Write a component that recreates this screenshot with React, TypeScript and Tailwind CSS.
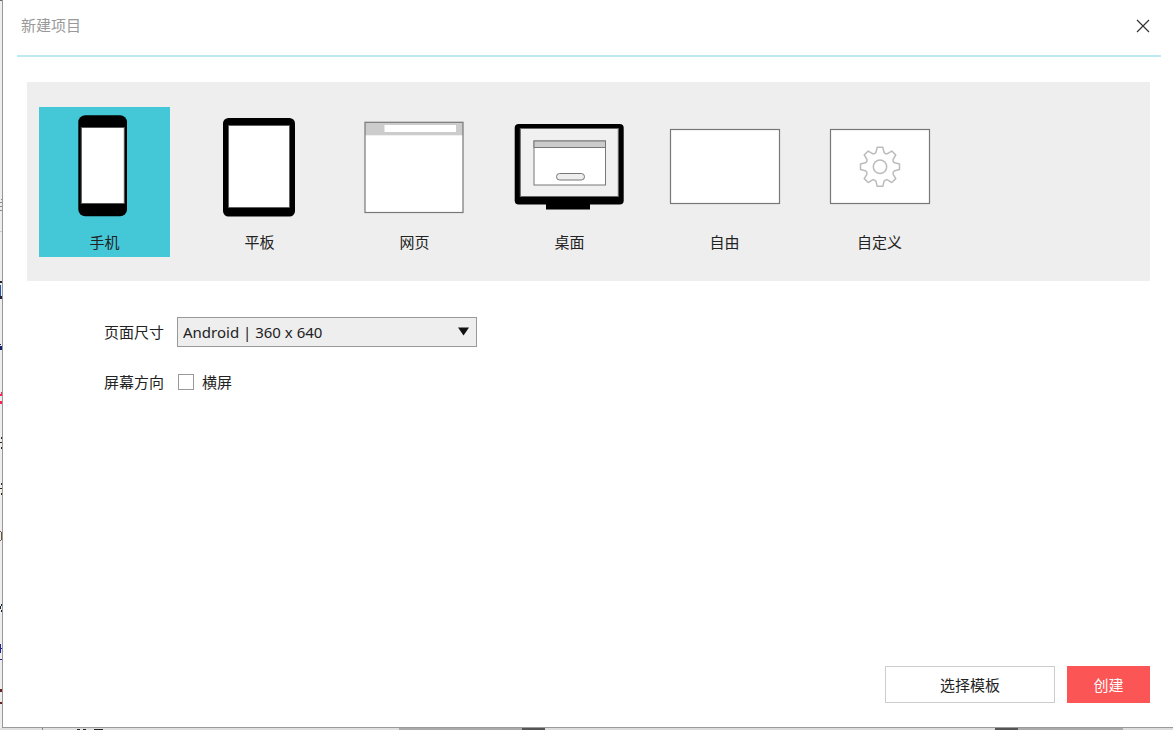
import React, { useState } from "react";
import type { ReactNode } from "react";

const gearPath = (() => {
  const turn = (x: number, y: number, step: number) => {
    const a = (step * Math.PI) / 4;
    const rx = x * Math.cos(a) - y * Math.sin(a);
    const ry = x * Math.sin(a) + y * Math.cos(a);
    return `${rx.toFixed(2)} ${ry.toFixed(2)}`;
  };
  let d = "";
  for (let i = 0; i < 8; i++) {
    d += `${i === 0 ? "M" : "L"}${turn(-2.8, -19.5, i)}L${turn(2.8, -19.5, i)}L${turn(4, -14.6, i)}`;
    d += `C${turn(5.4, -12.6, i)} ${turn(-5.4, -12.6, i + 1)} ${turn(-4, -14.6, i + 1)}`;
  }
  return d + "Z";
})();

type Device = { id: string; label: string; art: ReactNode };

const devices: Device[] = [
  {
    id: "phone",
    label: "手机",
    art: (
      <>
        <rect x="39.3" y="8.3" width="48.7" height="101" rx="7" />
        <rect x="42.3" y="20.5" width="43" height="76" fill="#fff" stroke="#555" />
      </>
    ),
  },
  {
    id: "tablet",
    label: "平板",
    art: (
      <>
        <rect x="29" y="11" width="72" height="98.5" rx="5.5" />
        <rect x="34.5" y="18.5" width="61" height="82" fill="#fff" stroke="#555" strokeWidth=".7" />
      </>
    ),
  },
  {
    id: "web",
    label: "网页",
    art: (
      <>
        <rect x="16" y="15.3" width="98" height="90.2" fill="#fff" />
        <rect x="16" y="15.3" width="98" height="13" fill="#ccc" />
        <rect x="35.5" y="18" width="71.5" height="7" fill="#fff" />
        <rect x="16" y="15.3" width="98" height="90.2" fill="none" stroke="#777" strokeWidth="1.2" />
      </>
    ),
  },
  {
    id: "desktop",
    label: "桌面",
    art: (
      <>
        <rect x="10.7" y="17" width="109" height="80.5" rx="4" />
        <rect x="42" y="96" width="44" height="6.5" />
        <rect x="16.3" y="21.5" width="98" height="68" fill="#f1f0f0" stroke="#666" />
        <rect x="30" y="34" width="71.5" height="44" fill="#fff" stroke="#777" />
        <rect x="30" y="34" width="71.5" height="6.5" fill="#ccc" stroke="#777" />
        <rect x="52.5" y="66.5" width="28" height="6.5" rx="3.2" fill="#eee" stroke="#777" />
      </>
    ),
  },
  {
    id: "free",
    label: "自由",
    art: <rect x="11.5" y="22.5" width="109" height="74" fill="#fff" stroke="#777" strokeWidth="1.2" />,
  },
  {
    id: "custom",
    label: "自定义",
    art: (
      <>
        <rect x="16.5" y="22.5" width="99" height="74" fill="#fff" stroke="#777" strokeWidth="1.2" />
        <g transform="translate(66 59.8)" fill="none" stroke="#bbb" strokeWidth="1.5" strokeLinejoin="round">
          <path d={gearPath} />
          <circle r="6.7" />
        </g>
      </>
    ),
  },
];

/* Slices of the window behind the dialog */
function BackdropLeft() {
  return (
    <div className="w-0.5 shrink-0 bg-[#eee]" aria-hidden="true">
      <svg width="2" height="728" viewBox="0 0 2 728" className="block">
        <path d="M0 0h2v1H0z" fill="#765" />
        <path d="M1 199h1v1H1zM0 202h2v1H0zM0 206h2v1H0zM0 210h2v1H0z" fill="#888" />
        <path d="M0 231h2v1H0z" fill="#ccc" />
        <path d="M0 281h2v2H0zM0 296h2v3H0z" fill="#223" />
        <path d="M0 285h1v11H0z" fill="#2456b0" />
        <path d="M0 344h1v1H0zM0 346h2v4H0z" fill="#126" />
        <path d="M1 392h1v2H1zM0 394h2v2H0zM0 401h2v3H0z" fill="#f25" />
        <path d="M1 437h1v2H1zM0 442h2v1H0zM1 447h1v2H1zM1 483h1v2H1zM0 488h2v1H0zM1 493h1v2H1z" fill="#321" />
        <path d="M0 531h1v1H0zM1 532h1v8H1zM0 540h1v1H0z" fill="#654" />
        <path d="M1 604h1v2H1zM0 606h1v3H0zM1 610h1v2H1z" fill="#123" />
        <path d="M0 644h1v9H0zM0 648h2v1H0zM0 659h2v1H0z" fill="#229" />
        <path d="M0 689h2v3H0zM0 702h2v2H0z" fill="#622" />
      </svg>
    </div>
  );
}

function BackdropBottom() {
  return (
    <div className="h-0.5 shrink-0 overflow-hidden bg-[#ddd]" aria-hidden="true">
      <svg width="1173" height="2" viewBox="0 0 1173 2" className="block">
        <path d="M0 0h400v2H0z" fill="#e0e0e0" />
        <path d="M42 0h1v2h-1z" fill="#888" />
        <path d="M77 1h3v1h-3zM83 1h3v1h-3zM94 1h9v1h-9z" fill="#222" />
        <path d="M399 0h123v2H399zM1018 0h105v2h-105z" fill="#aaa" />
        <path d="M522 0h23v2h-23zM995 0h23v2h-23z" fill="#555" />
      </svg>
    </div>
  );
}

export default function App() {
  const [device, setDevice] = useState("phone");
  const [landscape, setLandscape] = useState(false);

  return (
    <div className="flex min-h-screen flex-col font-['Noto_Sans','Noto_Sans_CJK_SC',sans-serif] text-[15px] leading-5 text-[#222]">
      <div className="flex grow">
        <BackdropLeft />
        <main className="flex min-w-0 grow flex-col border-b border-l border-[#999] bg-white">
          <header className="ml-3.5 mr-3 flex h-[57px] items-start justify-between border-b-2 border-[#bceaf0] pl-1 pr-2">
            <h1 className="mt-[15px] text-[#999]">新建项目</h1>
            <button type="button" aria-label="关闭" className="mt-4 flex size-5 items-center justify-center text-[#333]">
              <svg width="14" height="14" viewBox="0 0 14 14" fill="none" stroke="currentColor" strokeWidth="1.2">
                <path d="M1 1l12 12M13 1L1 13" />
              </svg>
            </button>
          </header>

          <section className="ml-6 mr-[23px] mt-[25px] flex flex-wrap gap-6 bg-[#eee] px-3 pb-6 pt-[25px]">
            {devices.map((item) => (
              <button
                key={item.id}
                type="button"
                aria-pressed={device === item.id}
                onClick={() => setDevice(item.id)}
                className={device === item.id ? "w-[131px] bg-[#44c7d7]" : "w-[131px]"}
              >
                <svg width="131" height="120" viewBox="0 0 131 120" className="block" aria-hidden="true">
                  {item.art}
                </svg>
                <span className="block h-[30px] leading-[30px]">{item.label}</span>
              </button>
            ))}
          </section>

          <form className="ml-[101px] mt-9 flex flex-col gap-5">
            <div className="flex items-center">
              <label htmlFor="size" className="w-[73px]">
                页面尺寸
              </label>
              <div className="relative w-[300px]">
                <select
                  id="size"
                  className="block h-[30px] w-full appearance-none border border-[#999] bg-[#eee] pl-[5px] pr-8 outline-none"
                >
                  <option>Android | 360 x 640</option>
                </select>
                <svg
                  width="11"
                  height="9"
                  viewBox="0 0 11 9"
                  className="pointer-events-none absolute right-2 top-2.5"
                  aria-hidden="true"
                >
                  <path d="M0 .5h11L5.5 8.5z" fill="#111" />
                </svg>
              </div>
            </div>
            <div className="flex h-[30px] items-center">
              <span className="w-[74px]">屏幕方向</span>
              <label className="flex items-center gap-2">
                <input
                  type="checkbox"
                  checked={landscape}
                  onChange={(e) => setLandscape(e.target.checked)}
                  className="size-4 appearance-none border border-[#999] bg-white checked:bg-[#44c7d7]"
                />
                横屏
              </label>
            </div>
          </form>

          <footer className="mb-6 mr-[23px] mt-auto flex justify-end gap-3">
            <button type="button" className="h-[37px] w-[170px] border border-[#ccc] bg-white">
              选择模板
            </button>
            <button type="button" className="h-[37px] w-[83px] bg-[#fb5556] text-white">
              创建
            </button>
          </footer>
        </main>
      </div>
      <BackdropBottom />
    </div>
  );
}
